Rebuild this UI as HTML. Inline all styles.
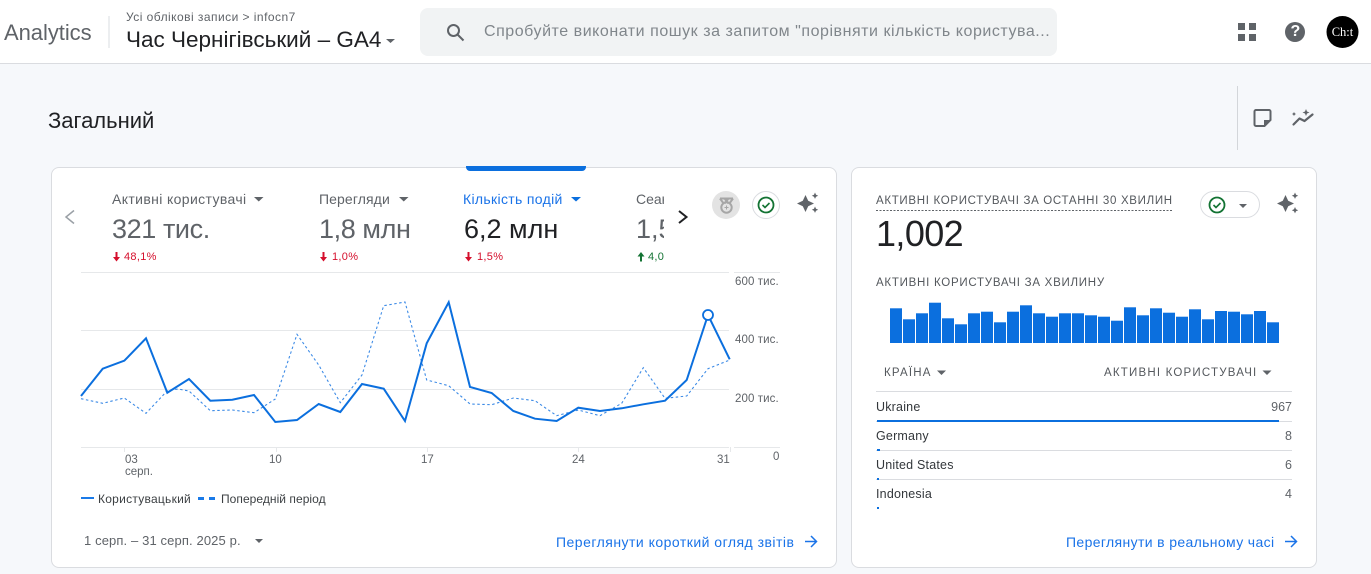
<!DOCTYPE html>
<html lang="uk"><head><meta charset="utf-8"><title>Analytics</title>
<style>
html,body{margin:0;padding:0;width:1371px;height:574px;overflow:hidden;background:#f6f8fb}
body{font-family:"Liberation Sans",sans-serif;position:relative}
.a{position:absolute;white-space:nowrap;line-height:1}
.hdr{position:absolute;left:0;top:0;width:1371px;height:63px;background:#fff;border-bottom:1px solid #dadce0}
.search{position:absolute;left:420px;top:8px;width:637px;height:48px;background:#f1f3f4;border-radius:8px}
.card{position:absolute;top:167px;height:399px;background:#fff;border:1px solid #dadce0;border-radius:8px;box-sizing:content-box}
svg{position:absolute;left:0;top:0}
.clip{position:absolute;left:636px;top:190px;width:28px;height:75px;overflow:hidden}
.up{color:#54585d;font-weight:normal}
</style></head><body>
<div class="hdr"></div>
<div class="search"></div>
<div class="card" style="left:51px;width:784px"></div>
<div class="card" style="left:851px;width:464px"></div>

<svg width="1371" height="574" viewBox="0 0 1371 574" fill="none">
<!-- header -->
<rect x="108.500" y="16" width="1" height="32" fill="#dadce0"/>
<path d="M386 39h9l-4.500 4z" fill="#5f6368"/>
<g stroke="#5f6368" stroke-width="2"><circle cx="453.500" cy="30.500" r="5.500"/><path d="M457.500 34.500l6 6"/></g>
<g fill="#5f6368"><rect x="1238" y="23" width="7" height="7"/><rect x="1249" y="23" width="7" height="7"/><rect x="1238" y="34" width="7" height="7"/><rect x="1249" y="34" width="7" height="7"/></g>
<circle cx="1295" cy="32" r="10" fill="#5f6368"/>
<circle cx="1342.500" cy="32" r="16" fill="#000"/>
<!-- right side toolbar -->
<rect x="1237" y="86" width="1" height="64" fill="#d3d6da"/>
<path d="M1264.500 126H1256a1.500 1.500 0 0 1-1.500-1.500v-13a1.500 1.500 0 0 1 1.500-1.500h13a1.500 1.500 0 0 1 1.500 1.500V120z" stroke="#5f6368" stroke-width="2"/>
<path d="M1264 126v-6h6.500z" fill="#5f6368"/>
<path d="M1293.500 124.500l6-6 5 2.500 8-6.500" stroke="#5f6368" stroke-width="2.200" stroke-linecap="round" stroke-linejoin="round"/>
<path d="M1306 109l1 2.500 2.500 1-2.500 1-1 2.500-1-2.500-2.500-1 2.500-1zM1294 112l.7 1.300 1.300.7-1.300.7-.7 1.300-.7-1.300-1.300-.7 1.300-.7z" fill="#5f6368"/>
<!-- tab -->
<path d="M466 166h120v1a4 4 0 0 1-4 4H470a4 4 0 0 1-4-4z" fill="#0b6fde"/>
<!-- card 1 controls -->
<path d="M74 210.500l-8 6.500 8 6.500" stroke="#9aa0a6" stroke-width="1.500"/>
<path d="M679 211l7.500 6-7.500 6" stroke="#202124" stroke-width="2"/>
<path d="M254 197h9.500l-4.750 4.500zM399 197h9.500l-4.750 4.500z" fill="#5f6368"/>
<path d="M571 197h10l-5 4.500z" fill="#0b6fde"/>
<circle cx="726" cy="205" r="14" fill="#e3e3e3"/>
<g stroke="#a6a6a6" stroke-width="2" stroke-linejoin="round"><circle cx="726.500" cy="207.500" r="5.200"/><path d="M720 198.500h13M720 198.500l4 5.500M733 198.500l-4 5.500M724.500 198.500l4 5M728.500 198.500l-4 5"/></g>
<path d="M724.500 207.500h4M726.500 205.500v4" stroke="#a6a6a6" stroke-width="1"/>
<circle cx="766" cy="205" r="13.500" fill="#fff" stroke="#dadce0"/>
<circle cx="766" cy="205" r="7.500" stroke="#137333" stroke-width="1.800"/>
<path d="M762.500 205l2.500 2.500 4.500-4.500" stroke="#137333" stroke-width="1.600"/>
<g fill="#5f6368">
<path d="M805.500 195l2.700 5.800 5.800 2.700-5.800 2.700-2.700 5.800-2.700-5.800-5.800-2.700 5.800-2.700z"/>
<path d="M815 192.500l1 2.200 2.200 1-2.200 1-1 2.200-1-2.200-2.200-1 2.200-1zM815 206.500l1 2.200 2.200 1-2.200 1-1 2.200-1-2.200-2.200-1 2.200-1z"/>
<path d="M1285.500 195l2.700 5.800 5.800 2.700-5.800 2.700-2.700 5.800-2.700-5.800-5.800-2.700 5.800-2.700z"/>
<path d="M1295 192.500l1 2.200 2.200 1-2.200 1-1 2.200-1-2.200-2.200-1 2.200-1zM1295 207l1 2.200 2.200 1-2.200 1-1 2.200-1-2.200-2.200-1 2.200-1z"/>
</g>
<!-- trend arrows -->
<g fill="#d50f2c"><path d="M115.500 252h2v5h2.500l-3.500 4.500-3.500-4.500h2.500z"/><path d="M322.500 252h2v5h2.500l-3.500 4.500-3.500-4.500h2.500z"/><path d="M467.500 252h2v5h2.500l-3.500 4.500-3.500-4.500h2.500z"/></g>
<path d="M640 261.500h2v-5h2.500l-3.500-4.500-3.500 4.500h2.500z" fill="#137333"/>
<!-- grid -->
<g fill="#e6e8ea"><rect x="81" y="272" width="648" height="1"/><rect x="81" y="330" width="648" height="1"/><rect x="81" y="389" width="648" height="1"/><rect x="81" y="447" width="648" height="1"/><rect x="734" y="272" width="46" height="1"/><rect x="734" y="447" width="46" height="1"/>
<rect x="124" y="447" width="1" height="5"/><rect x="276" y="447" width="1" height="5"/><rect x="427" y="447" width="1" height="5"/><rect x="578" y="447" width="1" height="5"/><rect x="730" y="447" width="1" height="5"/></g>
<!-- dashed -->
<path d="M81 398.700L102.700 403.300 124.300 398 146 413.300 167.300 390.700 178 389 189 391 210.300 410.700 232.300 410 254 412.700 275.300 399 297 334.300 318.700 365 340.300 402.700 362 375 383.700 305.700 405 302 426.700 380 448.700 385.700 470 404 491.700 404.700 513.300 398 535 400.700 556.700 415.700 578.300 410 600 415.700 621.700 403.300 643.300 367.700 665 398.300 686.700 396 708 368.700 729.700 360" stroke="#3d8be6" stroke-width="1.100" stroke-dasharray="2.500 2.500"/>
<!-- solid -->
<path d="M81 396L102.700 368.700 124.300 360.700 146 338.300 167.300 392.700 189 379 210.300 400.700 232.300 399.700 254 395 275.300 422 297 420 318.700 404 340.300 412 362 384 383.700 388.700 405 421 426.700 343.300 448.700 302.300 470 387 491.700 393 513.300 411 535 418.700 556.700 421 578.300 407.700 600 411 621.700 408.300 643.300 404.300 665 400.700 686.700 380 708 315 729.700 359.300" stroke="#0b6fde" stroke-width="2"/>
<circle cx="708" cy="315" r="5" fill="#fff" stroke="#0b6fde" stroke-width="1.800"/>
<!-- legend -->
<rect x="81" y="497" width="13" height="2" fill="#1a7ae8"/>
<rect x="198" y="497" width="6" height="3" fill="#1a7ae8"/><rect x="209" y="497" width="6" height="3" fill="#1a7ae8"/>
<path d="M255 539h8l-4 4z" fill="#5f6368"/>
<path d="M805 541.500h11.500M811 536l5.500 5.500-5.500 5.500" stroke="#1a73e8" stroke-width="1.500"/>
<path d="M1285 541.500h11.500M1291 536l5.500 5.500-5.500 5.500" stroke="#1a73e8" stroke-width="1.500"/>
<!-- card 2 -->
<path d="M876 210.500h296" stroke="#5f6368" stroke-dasharray="2 1.500"/>
<rect x="1200.500" y="191.500" width="59" height="26" rx="13" fill="#fff" stroke="#dadce0"/>
<circle cx="1217" cy="205" r="7.500" stroke="#137333" stroke-width="1.800"/>
<path d="M1213.500 205l2.500 2.500 4.500-4.500" stroke="#137333" stroke-width="1.600"/>
<path d="M1239 204h8l-4 4z" fill="#5f6368"/>
<!-- bars -->
<g fill="#0b6fde">
<rect x="890" y="308.300" width="12" height="34.700"/><rect x="903" y="319.300" width="12" height="23.700"/><rect x="916" y="313.300" width="12" height="29.700"/><rect x="929" y="302.700" width="12" height="40.300"/><rect x="942" y="318.300" width="12" height="24.700"/><rect x="955" y="324.300" width="12" height="18.700"/><rect x="968" y="313.300" width="12" height="29.700"/><rect x="981" y="311.700" width="12" height="31.300"/><rect x="994" y="322.300" width="12" height="20.700"/><rect x="1007" y="311.700" width="12" height="31.300"/><rect x="1020" y="305.300" width="12" height="37.700"/><rect x="1033" y="313.300" width="12" height="29.700"/><rect x="1046" y="316.700" width="12" height="26.300"/><rect x="1059" y="313.300" width="12" height="29.700"/><rect x="1072" y="313.300" width="12" height="29.700"/><rect x="1085" y="315.300" width="12" height="27.700"/><rect x="1098" y="316.700" width="12" height="26.300"/><rect x="1111" y="320.700" width="12" height="22.300"/><rect x="1124" y="307.300" width="12" height="35.700"/><rect x="1137" y="315.300" width="12" height="27.700"/><rect x="1150" y="308.300" width="12" height="34.700"/><rect x="1163" y="312.700" width="12" height="30.300"/><rect x="1176" y="316.700" width="12" height="26.300"/><rect x="1189" y="309.300" width="12" height="33.700"/><rect x="1202" y="319.300" width="12" height="23.700"/><rect x="1215" y="311" width="12" height="32"/><rect x="1228" y="311.700" width="12" height="31.300"/><rect x="1241" y="314.300" width="12" height="28.700"/><rect x="1254" y="311" width="12" height="32"/><rect x="1267" y="322.300" width="12" height="20.700"/>
</g>
<path d="M937 370.500h9l-4.500 4.500zM1262.500 370.500h9l-4.500 4.500z" fill="#5f6368"/>
<g fill="#dadce0"><rect x="876" y="391" width="416" height="1"/><rect x="876" y="421" width="416" height="1"/><rect x="876" y="450" width="416" height="1"/><rect x="876" y="479" width="416" height="1"/></g>
<g fill="#0b6fde"><rect x="877" y="420" width="402" height="2"/><rect x="877" y="449" width="3" height="2"/><rect x="877" y="478" width="2" height="2"/><rect x="877" y="507" width="2" height="2"/></g>
</svg>

<!-- header text -->
<div class="a" style="left:4px;top:22px;font-size:22px;color:#5f6368;letter-spacing:-.05px">Analytics</div>
<div class="a" style="left:126px;top:11px;font-size:12px;color:#5f6368;letter-spacing:.46px">Усі облікові записи &gt; infocn7</div>
<div class="a" style="left:126px;top:29px;font-size:22.500px;color:#202124">Час Чернігівський – GA4</div>
<div class="a" style="left:484px;top:24px;font-size:16px;color:#80868b;letter-spacing:.54px">Спробуйте виконати пошук за запитом "порівняти кількість користува...</div>
<div class="a" style="left:1290.500px;top:24px;font-size:16px;font-weight:bold;color:#fff">?</div>
<div class="a" style="left:1328px;top:26px;width:29px;text-align:center;font-family:'Liberation Serif',serif;font-size:12.500px;color:#fff">Ch:t</div>
<div class="a" style="left:48px;top:110px;font-size:22px;color:#202124">Загальний</div>

<!-- metrics -->
<div class="a" style="left:112px;top:192px;font-size:14px;color:#5f6368;letter-spacing:.37px">Активні користувачі</div>
<div class="a" style="left:112px;top:216px;font-size:27px;color:#5f6368;letter-spacing:-.4px">321 тис.</div>
<div class="a" style="left:124px;top:252px;font-size:11px;color:#d50f2c;letter-spacing:.3px">48,1%</div>
<div class="a" style="left:319px;top:192px;font-size:14px;color:#5f6368;letter-spacing:.1px">Перегляди</div>
<div class="a" style="left:319px;top:216px;font-size:27px;color:#5f6368;letter-spacing:-.4px">1,8 млн</div>
<div class="a" style="left:332px;top:252px;font-size:11px;color:#d50f2c;letter-spacing:.3px">1,0%</div>
<div class="a" style="left:463px;top:192px;font-size:14px;color:#1a73e8;letter-spacing:.33px">Кількість подій</div>
<div class="a" style="left:464px;top:216px;font-size:27px;color:#202124">6,2 млн</div>
<div class="a" style="left:477px;top:252px;font-size:11px;color:#d50f2c;letter-spacing:.3px">1,5%</div>
<div class="clip">
<div class="a" style="left:0;top:2px;font-size:14px;color:#5f6368">Сеанси</div>
<div class="a" style="left:0;top:26px;font-size:27px;color:#5f6368">1,5 млн</div>
<div class="a" style="left:12px;top:62px;font-size:11px;color:#137333;letter-spacing:.3px">4,0%</div>
</div>

<!-- axes -->
<div class="a" style="left:735px;top:277px;font-size:11.500px;color:#5f6368;letter-spacing:.1px">600 тис.</div>
<div class="a" style="left:735px;top:335px;font-size:11.500px;color:#5f6368;letter-spacing:.1px">400 тис.</div>
<div class="a" style="left:735px;top:394px;font-size:11.500px;color:#5f6368;letter-spacing:.1px">200 тис.</div>
<div class="a" style="left:773px;top:452px;font-size:11.500px;color:#5f6368">0</div>
<div class="a" style="left:125px;top:455px;font-size:11.500px;color:#5f6368">03</div>
<div class="a" style="left:125px;top:467px;font-size:11.500px;color:#5f6368">серп.</div>
<div class="a" style="left:269px;top:455px;font-size:11.500px;color:#5f6368">10</div>
<div class="a" style="left:421px;top:455px;font-size:11.500px;color:#5f6368">17</div>
<div class="a" style="left:572px;top:455px;font-size:11.500px;color:#5f6368">24</div>
<div class="a" style="left:717px;top:455px;font-size:11.500px;color:#5f6368">31</div>
<div class="a" style="left:98px;top:493px;font-size:12px;color:#3c4043;letter-spacing:.26px">Користувацький</div>
<div class="a" style="left:221px;top:493px;font-size:12px;color:#3c4043;letter-spacing:.05px">Попередній період</div>
<div class="a" style="left:84px;top:534px;font-size:13px;color:#5f6368;letter-spacing:.12px">1 серп. – 31 серп. 2025 р.</div>
<div class="a" style="left:556px;top:535px;font-size:14px;color:#1a73e8;letter-spacing:.48px">Переглянути короткий огляд звітів</div>

<!-- right card text -->
<div class="a up" style="left:876px;top:196px;font-size:11.500px;letter-spacing:.68px">АКТИВНІ КОРИСТУВАЧІ ЗА ОСТАННІ 30 ХВИЛИН</div>
<div class="a" style="left:876px;top:216px;font-size:36px;color:#202124;letter-spacing:-.6px">1,002</div>
<div class="a up" style="left:876px;top:278px;font-size:11.500px;letter-spacing:.74px">АКТИВНІ КОРИСТУВАЧІ ЗА ХВИЛИНУ</div>
<div class="a up" style="left:884px;top:368px;font-size:11.500px;letter-spacing:1.2px">КРАЇНА</div>
<div class="a up" style="left:1104px;top:368px;font-size:11.500px;letter-spacing:1.2px">АКТИВНІ КОРИСТУВАЧІ</div>
<div class="a" style="left:876px;top:401px;font-size:12.500px;color:#33373b;letter-spacing:.2px">Ukraine</div>
<div class="a" style="right:79px;top:401px;font-size:12.500px;color:#5f6368">967</div>
<div class="a" style="left:876px;top:430px;font-size:12.500px;color:#33373b;letter-spacing:.2px">Germany</div>
<div class="a" style="right:79px;top:430px;font-size:12.500px;color:#5f6368">8</div>
<div class="a" style="left:876px;top:459px;font-size:12.500px;color:#33373b;letter-spacing:.2px">United States</div>
<div class="a" style="right:79px;top:459px;font-size:12.500px;color:#5f6368">6</div>
<div class="a" style="left:876px;top:488px;font-size:12.500px;color:#33373b;letter-spacing:.2px">Indonesia</div>
<div class="a" style="right:79px;top:488px;font-size:12.500px;color:#5f6368">4</div>
<div class="a" style="left:1066px;top:535px;font-size:14px;color:#1a73e8;letter-spacing:.36px">Переглянути в реальному часі</div>
</body></html>
